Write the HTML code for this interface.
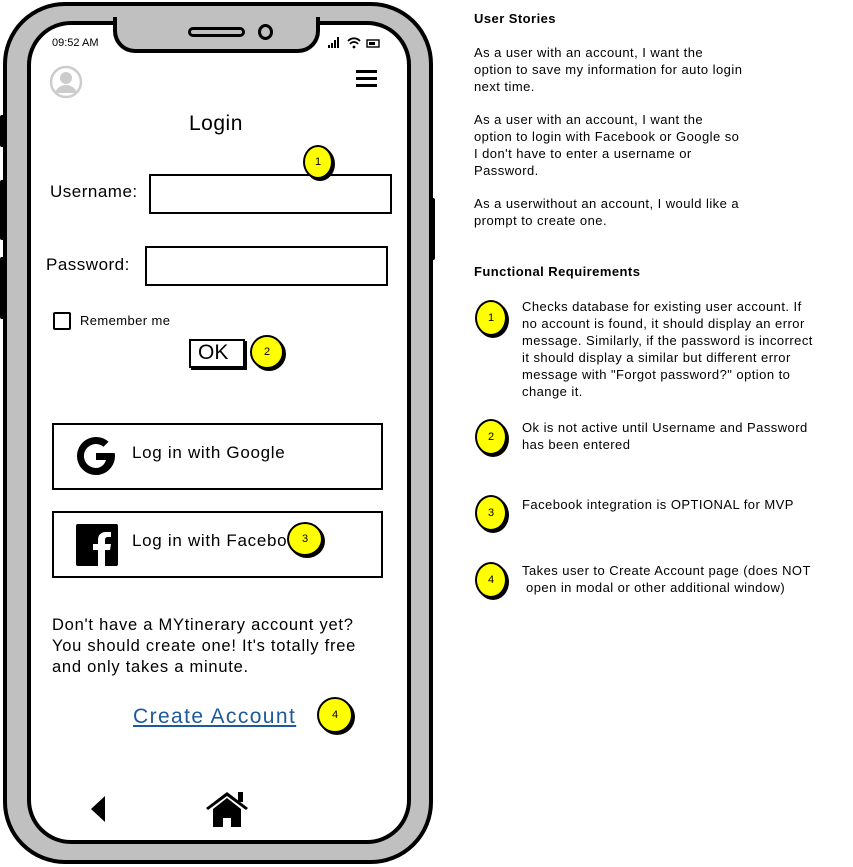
<!DOCTYPE html>
<html><head><style>
body{margin:0;width:853px;height:867px;background:#fff;position:relative;overflow:hidden;font-family:"Liberation Sans",sans-serif;color:#000}
.a{position:absolute}
.t{font-size:13px;line-height:17px;letter-spacing:0.45px}
.badge{position:absolute;width:30px;height:34px;border-radius:50%;background:#ffff00;border:2.5px solid #000;box-sizing:border-box;font-size:11px;display:flex;align-items:center;justify-content:center;box-shadow:2px 2px 0 #000;letter-spacing:0}
.box{position:absolute;border:2px solid #000;box-sizing:border-box;background:#fff}
</style></head><body>
<div class="a" style="left:0;top:115px;width:6px;height:32px;background:#000;border-radius:2px"></div>
<div class="a" style="left:0;top:180px;width:6px;height:60px;background:#000;border-radius:2px"></div>
<div class="a" style="left:0;top:257px;width:6px;height:62px;background:#000;border-radius:2px"></div>
<div class="a" style="left:428px;top:198px;width:7px;height:62px;background:#000;border-radius:2px"></div>
<div class="a" style="left:3px;top:2px;width:430px;height:862px;box-sizing:border-box;background:#c0c0c0;border:4px solid #000;border-radius:62px"></div>
<div class="a" style="left:27px;top:21px;width:384px;height:823px;box-sizing:border-box;background:#fff;border:4px solid #000;border-radius:44px"></div>
<div class="a" style="left:113px;top:17px;width:207px;height:36px;background:#c0c0c0;border:4px solid #000;border-top:none;box-sizing:border-box;border-radius:0 0 22px 22px"></div>
<div class="a" style="left:188px;top:27px;width:57px;height:10px;border:3px solid #000;box-sizing:border-box;border-radius:6px"></div>
<div class="a" style="left:258px;top:24px;width:15px;height:16px;border:3px solid #000;box-sizing:border-box;border-radius:50%"></div>
<div class="a" style="left:52px;top:37px;font-size:11px">09:52 AM</div>
<svg class="a" style="left:325px;top:36px" width="60" height="14"><rect x="3" y="9" width="2" height="3"/><rect x="6" y="7" width="2" height="5"/><rect x="9" y="4" width="2" height="8"/><rect x="12" y="1" width="2" height="11"/><path d="M23 5a8 8 0 0 1 12 0M25 8a5 5 0 0 1 8 0" stroke="#000" stroke-width="1.8" fill="none"/><circle cx="29" cy="11" r="1.4"/><rect x="42" y="4" width="12" height="7" fill="none" stroke="#000" stroke-width="1.4"/><rect x="44" y="6" width="6" height="3"/></svg>
<svg class="a" style="left:49px;top:65px" width="34" height="34"><circle cx="17" cy="17" r="15" fill="none" stroke="#ccc" stroke-width="2.5"/><circle cx="17" cy="13" r="6" fill="#ccc"/><path d="M6 28c2-6 7-8 11-8s9 2 11 8z" fill="#ccc"/></svg>
<div class="a" style="left:356px;top:70px;width:21px;height:3px;background:#000;box-shadow:0 7px 0 #000,0 14px 0 #000"></div>
<div class="a" style="left:189px;top:112px;font-size:21px;letter-spacing:0.5px">Login</div>
<div class="a" style="left:50px;top:182px;font-size:17px;letter-spacing:0.5px">Username:</div>
<div class="box" style="left:149px;top:174px;width:243px;height:40px"></div>
<div class="a" style="left:46px;top:255px;font-size:17px;letter-spacing:0.5px">Password:</div>
<div class="box" style="left:145px;top:246px;width:243px;height:40px"></div>
<div class="box" style="left:53px;top:312px;width:18px;height:18px;border-radius:2px"></div>
<div class="a" style="left:80px;top:313px;font-size:13px;letter-spacing:0.4px">Remember me</div>
<div class="box" style="left:189px;top:339px;width:56px;height:29px;font-size:21px;line-height:24px;padding-left:7px;box-shadow:2px 2px 0 #000">OK</div>
<div class="badge" style="left:303px;top:145px">1</div>
<div class="badge" style="left:250px;top:335px;width:34px">2</div>
<div class="box" style="left:52px;top:423px;width:331px;height:67px"></div>
<svg class="a" style="left:75px;top:435px" width="42" height="42" viewBox="0 0 42 42"><path d="M38 18H21v7h10c-1.5 5-5.5 8-10 8a12 12 0 1 1 7.5-21.3l5-5A19 19 0 1 0 40 21c0-1-.1-2-.3-3z" fill="#000"/></svg>
<div class="a" style="left:132px;top:443px;font-size:17px;letter-spacing:0.7px">Log in with Google</div>
<div class="box" style="left:52px;top:511px;width:331px;height:67px"></div>
<svg class="a" style="left:76px;top:524px" width="42" height="42" viewBox="0 0 42 42"><rect width="42" height="42" rx="2"/><path d="M29 42V26h5l1-6h-6v-4c0-2 1-3 3-3h3V8h-5c-5 0-8 3-8 8v4h-5v6h5v16z" fill="#fff"/></svg>
<div class="a" style="left:132px;top:531px;font-size:17px;letter-spacing:0.7px">Log in with Facebo</div>
<div class="badge" style="left:287px;top:522px;width:36px">3</div>
<div class="a" style="left:52px;top:615px;font-size:16.5px;line-height:21px;letter-spacing:0.75px">Don't have a MYtinerary account yet?<br>You should create one! It's totally free<br>and only takes a minute.</div>
<div class="a" style="left:133px;top:705px;font-size:21px;color:#1c5a9c;text-decoration:underline;letter-spacing:1.4px">Create Account</div>
<div class="badge" style="left:317px;top:697px;width:36px;height:36px">4</div>
<svg class="a" style="left:88px;top:795px" width="20" height="30"><path d="M17 1L3 14l14 13z"/></svg>
<svg class="a" style="left:204px;top:790px" width="46" height="38" viewBox="0 0 46 38"><path d="M2 18L23 2l21 16-2 2-19-14L4 20z"/><rect x="34" y="2" width="5" height="10"/><path d="M9 19l14-11 14 11v18H27v-9h-8v9H9z"/></svg>
<div class="a t" style="left:474px;top:10px;font-weight:bold">User Stories</div>
<div class="a t" style="left:474px;top:44px">As a user with an account, I want the<br>option to save my information for auto login<br>next time.</div>
<div class="a t" style="left:474px;top:111px">As a user with an account, I want the<br>option to login with Facebook or Google so<br>I don't have to enter a username or<br>Password.</div>
<div class="a t" style="left:474px;top:195px">As a userwithout an account, I would like a<br>prompt to create one.</div>
<div class="a t" style="left:474px;top:263px;font-weight:bold">Functional Requirements</div>
<div class="badge" style="left:475px;top:300px;width:32px;height:36px">1</div>
<div class="a t" style="left:522px;top:298px">Checks database for existing user account. If<br>no account is found, it should display an error<br>message. Similarly, if the password is incorrect<br>it should display a similar but different error<br>message with "Forgot password?" option to<br>change it.</div>
<div class="badge" style="left:475px;top:419px;width:32px;height:36px">2</div>
<div class="a t" style="left:522px;top:419px">Ok is not active until Username and Password<br>has been entered</div>
<div class="badge" style="left:475px;top:495px;width:32px;height:36px">3</div>
<div class="a t" style="left:522px;top:496px">Facebook integration is OPTIONAL for MVP</div>
<div class="badge" style="left:475px;top:562px;width:32px;height:36px">4</div>
<div class="a t" style="left:522px;top:562px">Takes user to Create Account page (does NOT<br>&nbsp;open in modal or other additional window)</div>
</body></html>
